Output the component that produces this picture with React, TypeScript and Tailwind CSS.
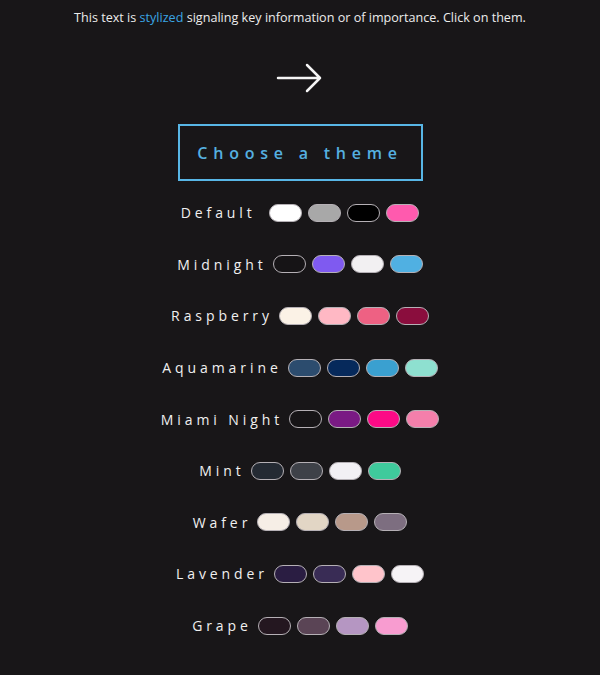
import React from "react";

type Theme = { name: string; colors: string[] };

const THEMES: Theme[] = [
  { name: "Default ", colors: ["#ffffff", "#a8a8a8", "#000000", "#ff5aae"] },
  { name: "Midnight", colors: ["#161416", "#7f5af0", "#f2f0f2", "#50b0e2"] },
  { name: "Raspberry", colors: ["#fbf2e6", "#ffb8c4", "#ee6183", "#8a0d3d"] },
  { name: "Aquamarine", colors: ["#2c4c6e", "#06295b", "#3aa0d0", "#8ee0d0"] },
  { name: "Miami Night", colors: ["#161416", "#7a1a84", "#fc0a86", "#f47fab"] },
  { name: "Mint", colors: ["#242a33", "#3e4148", "#f2f0f4", "#3fca9c"] },
  { name: "Wafer", colors: ["#f6eee6", "#e2d6c5", "#b8998a", "#7d6e80"] },
  { name: "Lavender", colors: ["#2a1d42", "#392c55", "#ffc4cb", "#f6f3f6"] },
  { name: "Grape", colors: ["#241720", "#5a4455", "#b596c2", "#f89cd0"] },
];

function Pill({ color }: { color: string }) {
  return (
    <button
      className="h-[18px] w-[33px] rounded-full border border-[#b5b0b5]"
      style={{ backgroundColor: color }}
      aria-label={color}
    />
  );
}

export default function App() {
  return (
    <div
      className="flex min-h-[675px] w-full flex-col items-center bg-[#181618] pt-[9px] text-[#ececec]"
      style={{ fontFamily: '"Open Sans", "Noto Sans", sans-serif' }}
    >
      <p className="text-[12.6px] leading-[17px]">
        This text is <span className="text-[#3aa5e4]">stylized</span> signaling
        key information or of importance. Click on them.
      </p>

      {/* стрелка */}
      <svg
        width="48"
        height="32"
        viewBox="0 0 48 32"
        fill="none"
        stroke="#f5f5f5"
        strokeWidth="2.5"
        strokeLinecap="round"
        strokeLinejoin="round"
        className="mt-[36px]"
        aria-hidden="true"
      >
        <path d="M2 16h42M31 3l13 13-13 13" />
      </svg>

      <div className="mt-[30px] flex h-[57px] w-[245px] items-center justify-center border-2 border-[#58b6e6]">
        <span className="text-[16px] font-semibold tracking-[0.36em] text-[#55b0e0]">
          Choose a theme
        </span>
      </div>

      <div className="mt-[22px] flex flex-col items-center gap-[32px]">
        {THEMES.map((t) => (
          <div key={t.name} className="flex h-[19.6px] items-center gap-[6px]">
            <span className="whitespace-pre text-[14px] tracking-[0.28em] text-[#f0f0f0]">
              {t.name}
            </span>
            <div className="flex gap-[6px]">
              {t.colors.map((c, i) => (
                <Pill key={i} color={c} />
              ))}
            </div>
          </div>
        ))}
      </div>
    </div>
  );
}
